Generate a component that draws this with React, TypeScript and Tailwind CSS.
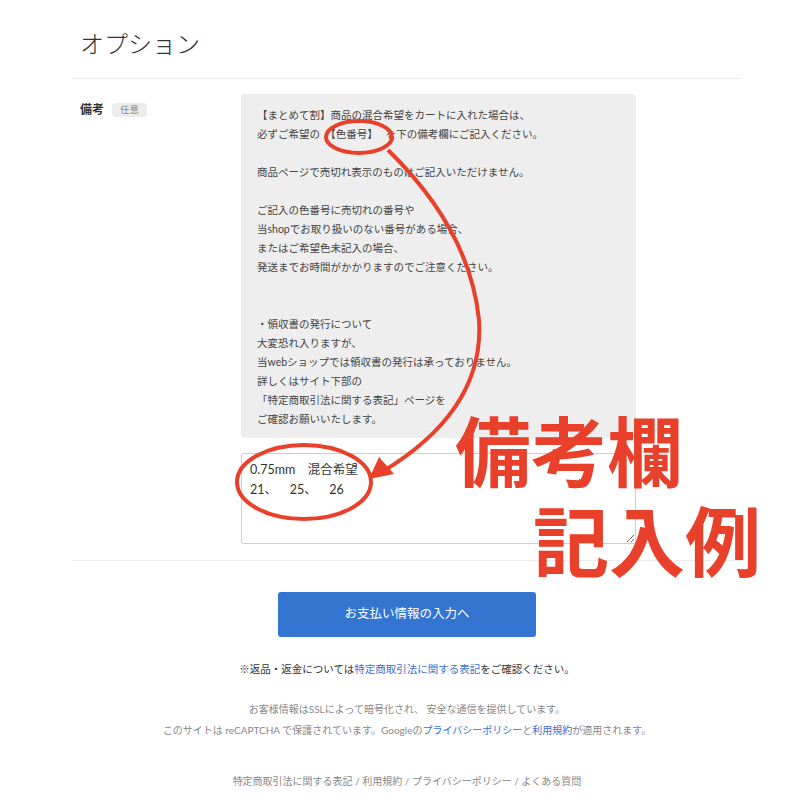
import React from "react";

const jp = { fontFamily: 'Lato, "Noto Sans CJK JP", sans-serif' };

const notice = `【まとめて割】商品の混合希望をカートに入れた場合は、
必ずご希望の　【色番号】　 を下の備考欄にご記入ください。

商品ページで売切れ表示のものはご記入いただけません。

ご記入の色番号に売切れの番号や
当shopでお取り扱いのない番号がある場合、
またはご希望色未記入の場合、
発送までお時間がかかりますのでご注意ください。


・領収書の発行について
大変恐れ入りますが、
当webショップでは領収書の発行は承っておりません。
詳しくはサイト下部の
「特定商取引法に関する表記」ページを
ご確認お願いいたします。`;

function Annotations() {
  return (
    <>
      <svg className="pointer-events-none absolute left-0 top-0" width="800" height="800" viewBox="0 0 800 800">
        <g fill="none" stroke="#e8402a" strokeWidth="4">
          <ellipse cx="359" cy="137" rx="33" ry="16" />
          <ellipse cx="304" cy="482" rx="67" ry="37" />
          <path d="M388 150 Q 470 230 479 320 Q 485 410 382 472" />
        </g>
        <polygon points="369,479 379,457 394,474" fill="#e8402a" />
      </svg>
      <div className="pointer-events-none absolute left-[455px] top-[410px] text-[76px] font-bold leading-none text-[#e8402a]" style={{ fontFamily: '"Noto Sans CJK JP", sans-serif' }}>
        備考欄
      </div>
      <div className="pointer-events-none absolute left-[533px] top-[500px] text-[76px] font-bold leading-none text-[#e8402a]" style={{ fontFamily: '"Noto Sans CJK JP", sans-serif' }}>
        記入例
      </div>
    </>
  );
}

export default function App() {
  return (
    <div className="relative min-h-[800px] w-[800px] overflow-hidden bg-white text-[#333]" style={jp}>
      <div className="ml-[72px] w-[670px]">
        <div className="border-b border-[#ececec] pb-[18px] pl-2 pt-[28px]">
          <h1 className="text-[24px] font-light leading-8 text-[#333]">オプション</h1>
        </div>

        <div className="flex border-b border-[#ececec] pb-4 pt-[15px]">
          <div className="flex w-[169px] shrink-0 items-start gap-2 pl-2 pt-[9px]">
            <span className="text-[12px] font-bold leading-[14px] text-[#333]">備考</span>
            <span className="rounded-sm bg-[#ededed] px-[8px] text-[9.5px] leading-[14px] text-[#888]">任意</span>
          </div>
          <div className="w-[395px]">
            <div className="whitespace-pre-line rounded-[4px] bg-[#eeeeee] pb-[9.5px] pl-4 pr-3 pt-[11.5px] text-[10.5px] leading-[19px] text-[#444]">
              {notice}
            </div>
            <textarea
              readOnly
              defaultValue={"0.75mm　混合希望\n21、　  25、　  26"}
              className="mt-[15px] block h-[91px] w-full rounded-[2px] border border-[#cfcfcf] bg-white px-2 pt-[6px] text-[12.5px] leading-[20px] text-[#333] outline-none"
              style={jp}
            />
          </div>
        </div>

        <div className="flex flex-col items-center">
          <button className="mt-[31px] h-[45px] w-[258px] rounded-[3px] bg-[#3375d1] text-[12.5px] text-white">
            お支払い情報の入力へ
          </button>
          <p className="mt-[22px] text-[10.5px] leading-5 text-[#333]">
            ※返品・返金については<a className="text-[#3a6fcf]">特定商取引法に関する表記</a>をご確認ください。
          </p>
          <div className="mt-[20px] text-center text-[10px] leading-[21px] text-[#888]">
            <p>お客様情報はSSLによって暗号化され、 安全な通信を提供しています。</p>
            <p>
              このサイトは reCAPTCHA で保護されています。Googleの<a className="text-[#3a6fcf]">プライバシーポリシー</a>と
              <a className="text-[#3a6fcf]">利用規約</a>が適用されます。
            </p>
          </div>
          <p className="mt-[30px] text-[10px] leading-5 text-[#888]">
            特定商取引法に関する表記 / 利用規約 / プライバシーポリシー / よくある質問
          </p>
        </div>
      </div>
      <Annotations />
    </div>
  );
}
